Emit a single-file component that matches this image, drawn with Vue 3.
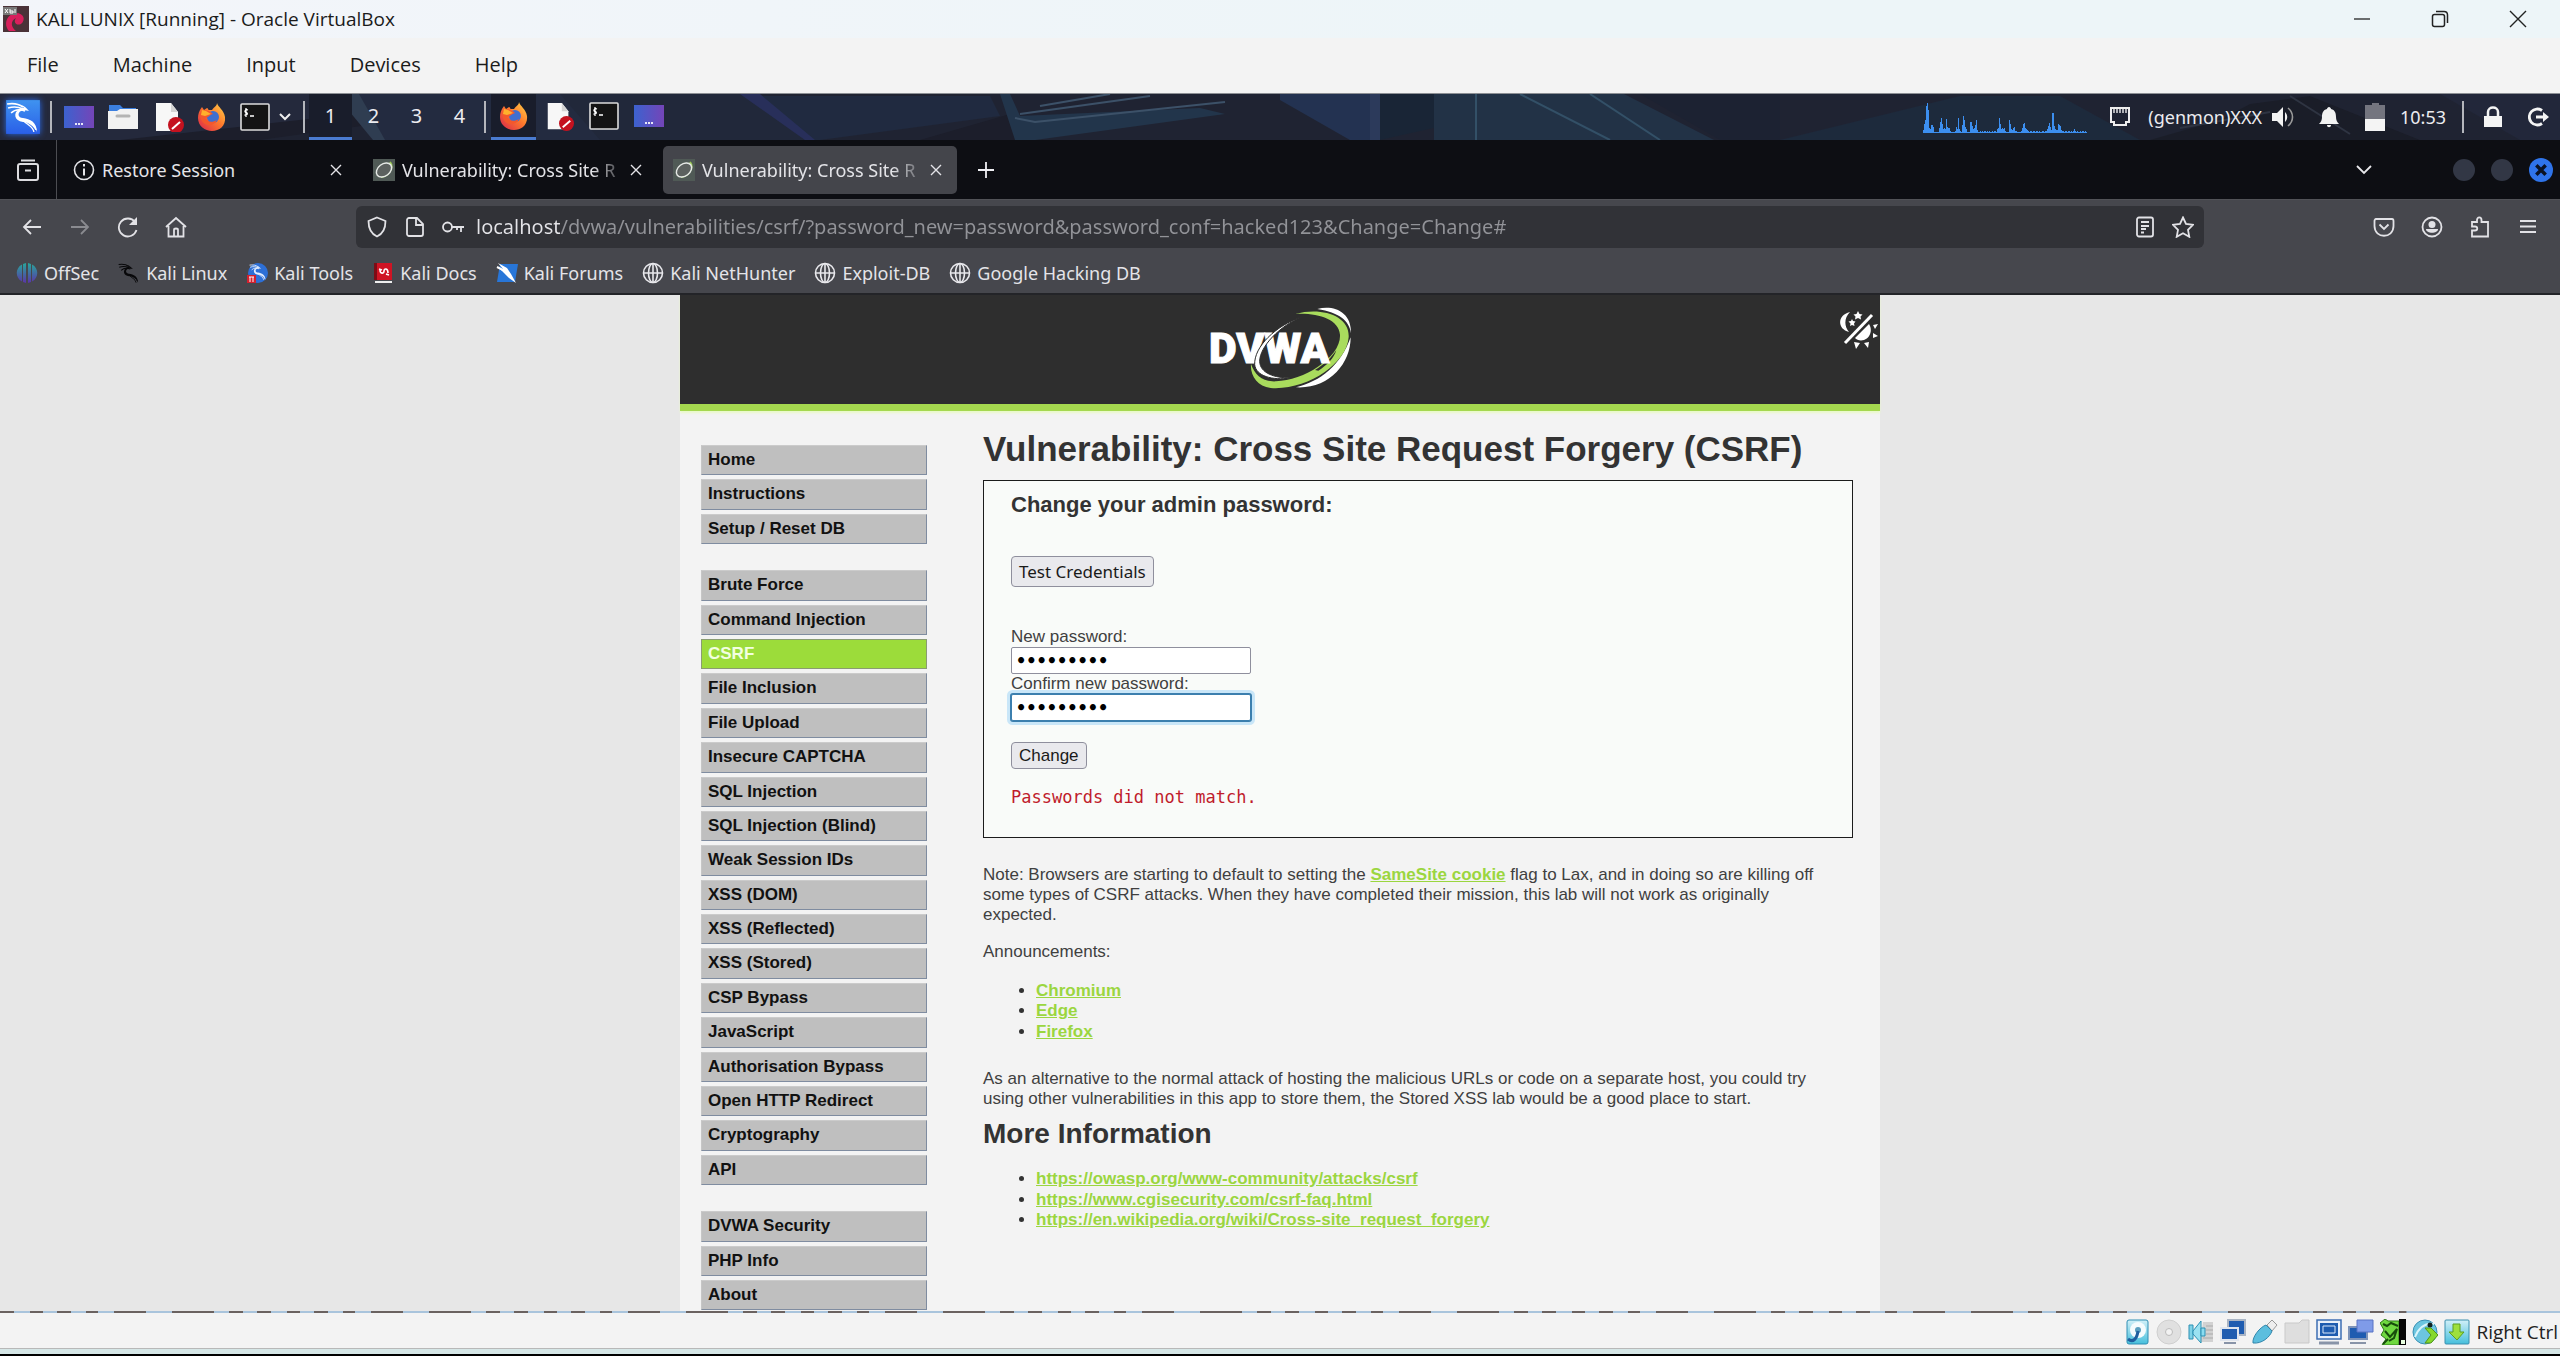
<script setup>
const menuGroups = [
  ['Home', 'Instructions', 'Setup / Reset DB'],
  [
    'Brute Force', 'Command Injection', 'CSRF', 'File Inclusion', 'File Upload',
    'Insecure CAPTCHA', 'SQL Injection', 'SQL Injection (Blind)', 'Weak Session IDs',
    'XSS (DOM)', 'XSS (Reflected)', 'XSS (Stored)', 'CSP Bypass', 'JavaScript',
    'Authorisation Bypass', 'Open HTTP Redirect', 'Cryptography', 'API',
  ],
  ['DVWA Security', 'PHP Info', 'About'],
]
const vmMenus = ['File', 'Machine', 'Input', 'Devices', 'Help']
const tabs = [
  { title: 'Restore Session', icon: 'i-info' },
  { title: 'Vulnerability: Cross Site R', icon: 'i-dvwa', faded: true },
  { title: 'Vulnerability: Cross Site R', icon: 'i-dvwa', faded: true, active: true },
]
const bookmarks = [
  { label: 'OffSec', icon: 'i-offsec' },
  { label: 'Kali Linux', icon: 'i-dragon-dark' },
  { label: 'Kali Tools', icon: 'i-tools' },
  { label: 'Kali Docs', icon: 'i-docs' },
  { label: 'Kali Forums', icon: 'i-forums' },
  { label: 'Kali NetHunter', icon: 'i-globe' },
  { label: 'Exploit-DB', icon: 'i-globe' },
  { label: 'Google Hacking DB', icon: 'i-globe' },
]
const announcements = ['Chromium', 'Edge', 'Firefox']
const references = [
  'https://owasp.org/www-community/attacks/csrf',
  'https://www.cgisecurity.com/csrf-faq.html',
  'https://en.wikipedia.org/wiki/Cross-site_request_forgery',
]
const tasks = ['i-firefox', 'i-blocked-doc', 'i-terminal', 'i-desktop']
const statusIcons = [
  's-disk', 's-optical', 's-audio', 's-network', 's-usb', 's-folder',
  's-display', 's-record', 's-cpu', 's-mouse', 's-keyboard',
]
const address = 'localhost/dvwa/vulnerabilities/csrf/?password_new=password&password_conf=hacked123&Change=Change#'
const cpuLoad = [
  2, 8, 12, 26, 29, 22, 4, 3, 7, 7, 5, 0, 0, 0, 0, 0, 4, 10, 14, 8, 3, 4, 3, 13, 5, 4, 4, 1, 0, 0, 0, 0,
  1, 5, 3, 14, 3, 1, 0, 7, 16, 12, 5, 3, 0, 0, 0, 10, 10, 6, 3, 4, 7, 12, 2, 0, 0, 1, 0, 1, 0, 1, 1, 0,
  1, 0, 1, 0, 0, 1, 0, 1, 1, 0, 3, 4, 14, 8, 3, 4, 3, 4, 1, 0, 0, 0, 12, 8, 3, 2, 4, 5, 1, 1, 0, 0, 0, 0, 1, 4, 8, 9, 4,
  3, 2, 1, 0, 1, 1, 0, 1, 1, 0, 1, 1, 0, 1, 0, 0, 1, 1, 0, 1, 1, 3, 6, 9, 5, 2, 19, 19, 6, 3, 2, 2, 8, 7, 6, 2,
  1, 1, 0, 1, 1, 0, 1, 1, 0, 1, 0, 1, 3, 1, 0, 1, 0, 0, 1, 0, 1, 1, 0, 1, 0,
]
</script>

<template>
  <div class="screen">
    <svg class="defs" aria-hidden="true">
      <defs>
        <linearGradient id="g-desk" x1="0" x2="1" y1="0" y2="0"><stop offset="0" stop-color="#3c62cf" /><stop offset="1" stop-color="#7445b8" /></linearGradient>
        <linearGradient id="g-kali" x1="0" x2="0" y1="0" y2="1"><stop offset="0" stop-color="#3f93f0" /><stop offset="1" stop-color="#2a5fe8" /></linearGradient>
        <linearGradient id="g-fox" x1="1" x2="0" y1="0" y2="1"><stop offset="0" stop-color="#ffd84a" /><stop offset=".45" stop-color="#ff7a2c" /><stop offset="1" stop-color="#d8234c" /></linearGradient>
        <linearGradient id="g-off" x1="0" x2="0" y1="0" y2="1"><stop offset="0" stop-color="#27a79b" /><stop offset="1" stop-color="#5b34a8" /></linearGradient>
        <linearGradient id="g-cyan" x1="0" x2="0" y1="0" y2="1"><stop offset="0" stop-color="#d2f0f8" /><stop offset="1" stop-color="#46bfdc" /></linearGradient>
      </defs>
      <symbol id="i-dragon" viewBox="0 0 34 34">
        <path d="M1 4c6-1 12 0 16 3M2 8c6-2 11-1 15 1M5 13c4-4 9-4 14-2" fill="none" stroke="currentColor" stroke-width="1.6" />
        <path d="M15 5c4 1 6 4 8 6-3-1-6-1-8 0-4 2-3 7 2 7 7 1 14 4 14 14-2-7-8-10-14-10-9-1-10-9-4-13 2-1 3-1 5-1z" fill="currentColor" />
        <path d="M17 20c4 5 10 6 11 12M20 21c5 3 9 5 10 9" fill="none" stroke="currentColor" stroke-width="1.4" />
      </symbol>
      <symbol id="i-desktop" viewBox="0 0 30 30">
        <rect y="4" width="30" height="22" fill="url(#g-desk)" />
        <path d="M11 22h2m1 0h2m1 0h2" stroke="#e8e8f8" stroke-width="2" />
      </symbol>
      <symbol id="i-files" viewBox="0 0 30 30">
        <path d="M1 3h11l3 3h13v7H1z" fill="#3b7fe0" /><path d="M0 9h9l3-2h18v20H0z" fill="#f2f2f2" />
        <path d="M9 14h12" stroke="#b4b4b4" stroke-width="3" stroke-linecap="round" />
      </symbol>
      <symbol id="i-blocked-doc" viewBox="0 0 32 30">
        <path d="M4 1h15l7 9v19H4z" fill="#f7f7f7" /><path d="M19 1l7 9h-7z" fill="#d4d4d4" />
        <circle cx="24" cy="23" r="8" fill="#c4121f" /><path d="M20 27l8-7" stroke="#fff" stroke-width="2" />
      </symbol>
      <symbol id="i-firefox" viewBox="0 0 28 30">
        <path d="M19 1c1 4 7 7 8 14 1 9-6 14-13 14S0 24 0 16c0-4 1-7 4-11l2 3 3-2c1 0 1 2 2 2h3c2-3 5-4 5-7z" fill="url(#g-fox)" />
        <circle cx="15" cy="15" r="6" fill="#3f6fd0" /><path d="M3 10c5-4 10 0 12 2-4 1-5 4-8 4 2 4 7 5 12 2-3 7-13 7-16-1-1-3-1-5 0-7z" fill="#f4582c" />
        <path d="M4 8l4 1 5 3-6 2-4-1z" fill="#ffb02c" />
      </symbol>
      <symbol id="i-terminal" viewBox="0 0 30 30">
        <rect x="1" y="2" width="28" height="26" rx="1" fill="#141414" stroke="#dcdcdc" stroke-width="1.6" />
        <path d="M8 8c-3-1-4 2-2 2.500s2 3-1.500 2.500M6 6v9M10 14h4" fill="none" stroke="#fff" stroke-width="1.3" />
      </symbol>
      <symbol id="i-info" viewBox="0 0 22 22">
        <circle cx="11" cy="11" r="9.500" fill="none" stroke="currentColor" stroke-width="1.6" />
        <path d="M11 5v2.500M11 9.500v7" stroke="currentColor" stroke-width="2" />
      </symbol>
      <symbol id="i-dvwa" viewBox="0 0 22 22">
        <rect width="22" height="22" fill="#505a56" />
        <path d="M17 3c4 5-1 14-9 15" fill="none" stroke="#9ccb55" stroke-width="2" />
        <ellipse cx="11" cy="11" rx="8.500" ry="6" transform="rotate(-38 11 11)" fill="#5c615f" stroke="#e6e9e6" stroke-width="1.500" />
      </symbol>
      <symbol id="i-close" viewBox="0 0 12 12"><path d="M1 1l10 10M11 1L1 11" stroke="currentColor" stroke-width="1.400" /></symbol>
      <symbol id="i-globe" viewBox="0 0 22 22">
        <g fill="none" stroke="#e8e8ec" stroke-width="1.600"><circle cx="11" cy="11" r="9.500" /><ellipse cx="11" cy="11" rx="4.500" ry="9.500" /><path d="M1.500 11h19M11 1.500v19" /></g>
      </symbol>
      <symbol id="i-offsec" viewBox="0 0 22 22">
        <path d="M6 2.500v17C-1 16-1 6 6 2.500zM10 1v20l-3-1V2zM12 1v20l3-1V2zM16 2.500v17c7-3.500 7-13.500 0-17z" fill="url(#g-off)" />
      </symbol>
      <symbol id="i-dragon-dark" viewBox="0 0 22 22"><use href="#i-dragon" color="#08080a" /></symbol>
      <symbol id="i-tools" viewBox="0 0 22 22">
        <circle cx="12" cy="11" r="10" fill="#2d6fd6" /><use href="#i-dragon" x="3" y="1" width="18" height="18" color="#e4eeff" />
        <path d="M1 13h9v8H1z" fill="#d3202e" /><path d="M3 15h5M4 15v5M7 15v5" stroke="#fff" stroke-width="1" />
      </symbol>
      <symbol id="i-docs" viewBox="0 0 22 22">
        <path d="M2 1h18v17H2z" fill="#cf1424" /><path d="M2 1h3v17H2z" fill="#7d0c16" /><path d="M3 20h17" stroke="#eee" stroke-width="2" />
        <path d="M8 8c0 4 4 4 4 1s4-3 4 2M7 7l3 1M14 12l3 1" fill="none" stroke="#fff" stroke-width="1.600" />
      </symbol>
      <symbol id="i-forums" viewBox="0 0 22 22">
        <path d="M4 2h18l-3 18H1z" fill="#2876d8" /><path d="M2 1l9 5 4 6 5 9-7-5-5-5-4-4 3 0z" fill="#fff" /><path d="M1 5l6 3" stroke="#fff" stroke-width="2" />
      </symbol>

      <symbol id="s-disk" viewBox="0 0 26 26"><rect x="3" y="1" width="21" height="24" rx="2" fill="url(#g-cyan)" stroke="#2f8fb4" /><circle cx="14" cy="11" r="8" fill="#f4fbfd" /><circle cx="14" cy="11" r="3" fill="#5a9fc0" /><path d="M4 20c5 4 9 0 10-8" stroke="#1f5f9f" stroke-width="3" fill="none" /></symbol>
      <symbol id="s-optical" viewBox="0 0 26 26"><circle cx="13" cy="13" r="12" fill="#e0e0e0" stroke="#cfcfcf" /><circle cx="13" cy="13" r="3.500" fill="#f2f2f2" stroke="#bbb" /></symbol>
      <symbol id="s-audio" viewBox="0 0 26 26"><path d="M15 3h10v20H13v-4z" fill="#d2d2d2" /><path d="M18 7h7M18 11h7M18 15h7M15 19h10" stroke="#aaa" /><path d="M1 6h4v14H1z" fill="#7fd3e8" stroke="#2c8fb2" /><path d="M5 12l8-10v22L5 15z" fill="#9be2f2" stroke="#2c8fb2" /><path d="M13 9h4v8h-4z" fill="#8adcf0" stroke="#2c8fb2" /></symbol>
      <symbol id="s-network" viewBox="0 0 26 26"><path d="M8 1h17v15H8z" fill="#1f5cb0" stroke="#a9b4c4" stroke-width="2" /><path d="M1 9h17v12H1z" fill="#1f5cb0" stroke="#dfe5ee" stroke-width="2" /><path d="M4 24h12" stroke="#8894a8" stroke-width="2" /></symbol>
      <symbol id="s-usb" viewBox="0 0 26 26"><path d="M15 6l5-5 5 5-5 6z" fill="#eee" stroke="#999" /><path d="M1 24C0 18 8 8 14 6l6 6c-2 6-10 13-19 12z" fill="#5cbede" stroke="#3186ac" /></symbol>
      <symbol id="s-folder" viewBox="0 0 26 26"><path d="M1 4h14l3-3h7v23H1z" fill="#dedede" stroke="#c9c9c9" /></symbol>
      <symbol id="s-display" viewBox="0 0 26 26"><path d="M1 1h24v19H1z" fill="#eaf0fa" stroke="#3e6fb4" stroke-width="1.500" /><path d="M4 4h18v13H4z" fill="#1f5cb0" /><path d="M7 7h12v7H7z" fill="none" stroke="#dbe8fa" /><path d="M3 24h20" stroke="#8894a8" stroke-width="3" /></symbol>
      <symbol id="s-record" viewBox="0 0 26 26"><path d="M1 8h18v12H1z" fill="#1f5cb0" stroke="#7d93b8" stroke-width="2" /><path d="M2 24h16" stroke="#8894a8" stroke-width="2" /><path d="M9 1h16v12H9z" fill="#7f9be8" stroke="#5873c4" /></symbol>
      <symbol id="s-cpu" viewBox="0 0 26 26"><path d="M0 4l5-4 3 2h11v24H2l4-6-5-4 3-5z" fill="#6fd840" stroke="#2d7a16" /><path d="M3 5l4 2 4-3 7 3M5 12l5 6 7-8-3 9-5 3M3 25l5-5" fill="none" stroke="#174d0c" stroke-width="2" /><path d="M19 0h7v26h-7z" fill="#060606" /><path d="M21 21h4v4h-4z" fill="#e8ffe0" /></symbol>
      <symbol id="s-mouse" viewBox="0 0 26 26"><ellipse cx="13" cy="13" rx="12" ry="12" fill="#6cc5e0" stroke="#3a90b4" /><path d="M3 18C7 8 14 4 22 5" stroke="#d9f4fb" fill="none" stroke-width="2" /><circle cx="18" cy="6" r="2.500" fill="#122" /><path d="M13 9l6 7-6 8h6l7-8-7-7z" fill="#86d82c" stroke="#52971a" /></symbol>
      <symbol id="s-keyboard" viewBox="0 0 26 26"><rect x="1" y="1" width="24" height="24" rx="1" fill="url(#g-cyan)" stroke="#3b8fae" /><path d="M9 5h7v8h4l-7 8-8-8h4z" fill="#9ee03c" stroke="#5c9f20" /></symbol>
    </svg>

    <header class="vm-title">
      <svg class="vm-logo" viewBox="0 0 26 26">
        <rect width="26" height="26" fill="#4a3238" /><path d="M6 25c-6-7-2-17 7-18 8 0 10 7 5 11-5 2-8-2-5-6-6 3-5 9 0 13z" fill="#d81f5c" />
        <path d="M0 1h14v8H0z" fill="#777" /><path d="M2 3l3 4m0-4L2 7m5-4v4h3V5H7m5-2v4" stroke="#fff" stroke-width="1" fill="none" />
      </svg>
      <span class="grow">KALI LUNIX [Running] - Oracle VirtualBox</span>
      <button aria-label="Minimise"><svg viewBox="0 0 18 18"><path d="M1 9h16" stroke="#222" stroke-width="1.300" /></svg></button>
      <button aria-label="Restore"><svg viewBox="0 0 18 18" fill="none" stroke="#222" stroke-width="1.500"><rect x="1.500" y="4.500" width="12" height="12" rx="2" /><path d="M5 1.500h8c2 0 3.500 1.500 3.500 3.500v8" /></svg></button>
      <button aria-label="Close"><svg viewBox="0 0 18 18"><path d="M1 1l16 16M17 1L1 17" stroke="#222" stroke-width="1.400" /></svg></button>
    </header>

    <nav class="vm-menu">
      <button v-for="m in vmMenus" :key="m">{{ m }}</button>
    </nav>

    <div class="panel">
      <svg class="panel-art" viewBox="0 0 2560 46" preserveAspectRatio="none" aria-hidden="true">
        <rect width="2560" height="46" fill="#202433" />
        <path d="M0 0h500L180 46H0z" fill="#262c40" /><path d="M120 46L480 6l40 4-260 36z" fill="#1b1d2a" />
        <path d="M352 0h220l80 46H378z" fill="#252f45" /><path d="M335 0l24 0 26 46-12 0z" fill="#35465c" />
        <path d="M560 0h190l60 46H600z" fill="#222a3e" /><path d="M750 2l240 0 10 20-180 24h-10z" fill="#212d45" />
        <path d="M740 0l20 0 55 46h-10z" fill="#2b3468" /><path d="M920 46l90-26 20 26z" fill="#1b1d29" />
        <path d="M1000 0h10l10 22 180-8 25 6-190 26-20 0z" fill="#243c54" /><path d="M1020 20l130-18M1040 12l70-12M1015 24l20 4 190-20" stroke="#46617b" stroke-width="2" fill="none" />
        <path d="M1280 0h90v46h-20L1280 6z" fill="#25385c" /><path d="M1370 0h10v46h-10z" fill="#31436a" /><path d="M1380 0h54v34l-54 12z" fill="#182638" />
        <path d="M1434 0h190l90 46h-280z" fill="#23384e" /><path d="M1476 0v46M1520 0l90 46M1590 0l70 46" stroke="#3a6079" stroke-width="2" />
        <path d="M1640 0h140v46h-60z" fill="#1c2233" /><path d="M1780 46L1960 2h100l80 44z" fill="#1d2d40" />
        <path d="M2150 46l70-20 30-16 60-8 110 44z" fill="#191c26" /><path d="M2180 34l90-16M2290 2l60 38" stroke="#343a48" stroke-width="2" /><path d="M2440 0h120v46h-40z" fill="#23293d" />
      </svg>
      <button class="kali" aria-label="Applications"><svg viewBox="0 0 36 36"><rect x="2" y="2" width="32" height="32" fill="url(#g-kali)" /><use href="#i-dragon" x="2" y="2" width="32" height="32" color="#fff" /></svg></button>
      <i class="sep"></i>
      <div class="launchers">
        <button aria-label="Show desktop"><svg class="w30"><use href="#i-desktop" /></svg></button>
        <button aria-label="Files"><svg class="w30"><use href="#i-files" /></svg></button>
        <button aria-label="Editor"><svg class="w32"><use href="#i-blocked-doc" /></svg></button>
        <button aria-label="Firefox"><svg class="w28"><use href="#i-firefox" /></svg></button>
        <button aria-label="Terminal"><svg class="w30"><use href="#i-terminal" /></svg></button>
      </div>
      <button class="more" aria-label="More terminals"><svg viewBox="0 0 14 14"><path d="M2 4l5 5 5-5" fill="none" stroke="#eee" stroke-width="2" /></svg></button>
      <i class="sep"></i>
      <button v-for="n in 4" :key="n" class="workspace" :class="{ on: n === 1 }">{{ n }}</button>
      <i class="sep tight"></i>
      <button v-for="(t, i) in tasks" :key="t" class="task" :class="{ on: i === 0 }" :aria-label="t"><svg class="w30"><use :href="'#' + t" /></svg></button>

      <div class="tray">
        <svg class="cpu" viewBox="0 0 172 32" preserveAspectRatio="none" aria-hidden="true">
          <rect v-for="(h, i) in cpuLoad" :key="i" :x="i" :y="31 - h" width="1" :height="h + 1" fill="#3c8ff0" />
        </svg>
        <svg class="w22 wired" viewBox="0 0 22 22"><path d="M2 2h18v14h-3v3H5v-3H2z" fill="none" stroke="#eee" stroke-width="2" /><path d="M5 3v4M8 3v4M11 3v4M14 3v4M17 3v4" stroke="#eee" stroke-width="1.400" /></svg>
        <span>(genmon)XXX</span>
        <svg class="w22 speaker" viewBox="0 0 22 22"><path d="M0 7h5l6-6v20l-6-6H0z" fill="#f2f2f2" /><path d="M13 6c3 3 3 7 0 10z" fill="#f2f2f2" /><path d="M16 2c6 5 6 13 0 18" fill="none" stroke="#999" stroke-width="1.600" /></svg>
        <svg class="w22 bell" viewBox="0 0 22 22"><path d="M11 1c1 0 2 1 2 2 4 1 5 4 5 8 0 3 1 5 3 7H1c2-2 3-4 3-7 0-4 1-7 5-8 0-1 1-2 2-2zM9 19h4c0 3-4 3-4 0z" fill="#f2f2f2" /></svg>
        <svg class="battery" viewBox="0 0 22 28"><path d="M8 0h7v2h6v14H1V2h7z" fill="#74757f" /><path d="M1 16h20v12H1z" fill="#f4f4f4" /></svg>
        <time>10:53</time>
        <i class="sep"></i>
        <button aria-label="Lock"><svg class="w22" viewBox="0 0 22 22"><path d="M2 10h18v11H2z" fill="#f4f4f4" /><path d="M6 10V6c0-6 10-6 10 0v4" fill="none" stroke="#f4f4f4" stroke-width="2.500" /></svg></button>
        <button aria-label="Log out" class="logout"><svg class="w22" viewBox="0 0 22 22"><path d="M14 4.500a8 8 0 1 0 0 13" fill="none" stroke="#f4f4f4" stroke-width="2.800" /><path d="M8 9.500h7V6l6 5-6 5v-3.500H8z" fill="#f4f4f4" /></svg></button>
      </div>
    </div>

    <div class="tabbar">
      <button class="archive" aria-label="Recent"><svg viewBox="0 0 22 22" fill="none" stroke="#dcdce0" stroke-width="2"><path d="M4 1.500h14" /><path d="M3 5h16c1 0 2 1 2 2v12c0 1-1 2-2 2H3c-1 0-2-1-2-2V7c0-1 1-2 2-2z" /><path d="M8 11.500h6" /></svg></button>
      <div v-for="(t, i) in tabs" :key="i" class="tab" :class="{ active: t.active }">
        <svg class="w22"><use :href="'#' + t.icon" /></svg>
        <a href="#" class="tab-title" :class="{ faded: t.faded }">{{ t.title }}</a>
        <button aria-label="Close tab"><svg class="w12"><use href="#i-close" /></svg></button>
      </div>
      <button class="new-tab" aria-label="New tab"><svg viewBox="0 0 18 18"><path d="M9 1v16M1 9h16" stroke="#f0f0f4" stroke-width="1.800" /></svg></button>
      <div class="win-controls">
        <button class="list-tabs" aria-label="List all tabs"><svg viewBox="0 0 18 18"><path d="M2 5l7 7 7-7" fill="none" stroke="#e8e8ec" stroke-width="1.800" /></svg></button>
        <button class="dot" aria-label="Minimise window"></button>
        <button class="dot" aria-label="Maximise window"></button>
        <button class="dot quit" aria-label="Close window"><svg viewBox="0 0 12 12"><path d="M2 2l8 8M10 2l-8 8" stroke="#0b1324" stroke-width="3" /></svg></button>
      </div>
    </div>

    <div class="toolbar">
      <button aria-label="Back"><svg viewBox="0 0 22 22"><path d="M20 11H3M10 4l-7 7 7 7" /></svg></button>
      <button aria-label="Forward" class="dim"><svg viewBox="0 0 22 22"><path d="M2 11h17M12 4l7 7-7 7" /></svg></button>
      <button aria-label="Reload"><svg viewBox="0 0 22 22"><path d="M18 6a9 9 0 1 0 1.500 8" /><path d="M20 1v8h-8z" fill="currentColor" stroke="none" /></svg></button>
      <button aria-label="Home"><svg viewBox="0 0 22 22"><path d="M1 11l10-9 10 9M3.500 10v10.500h15V10M9 20v-6c0-2 4-2 4 0v6" /></svg></button>
      <div class="urlbar">
        <svg viewBox="0 0 22 22"><path d="M11 1.500l8.500 3.500c0 8-3 13-8.500 15.500C5.500 18 2.500 13 2.500 5z" /></svg>
        <svg viewBox="0 0 22 22"><path d="M5 2h8l6 6v10c0 1-1 2-2 2H5c-1 0-2-1-2-2V4c0-1 1-2 2-2zM12 2v7h7" /></svg>
        <svg viewBox="0 0 22 22"><circle cx="5.500" cy="11" r="4.500" /><path d="M10 11h12M19 11v5M15 11v3" /></svg>
        <input type="text" aria-label="Address" :value="address" />
        <svg viewBox="0 0 22 22"><rect x="3" y="1.500" width="16" height="19" rx="2" /><path d="M7 6h8M7 10h8M7 13h5M7 16.500h3" /></svg>
        <svg viewBox="0 0 22 22"><path d="M11 1.500l3 6.500 7 .8-5 5 1.300 7L11 17.300 4.700 20.800l1.300-7-5-5L8 8z" /></svg>
      </div>
      <button aria-label="Pocket"><svg viewBox="0 0 22 22"><path d="M3 3h16c1 0 1.500 1 1.500 2v5c0 13-19 13-19 0V5c0-1 .5-2 1.500-2z" /><path d="M6.500 8.500L11 13l4.500-4.500" /></svg></button>
      <button aria-label="Account"><svg viewBox="0 0 22 22"><circle cx="11" cy="11" r="9.500" /><circle cx="11" cy="8.500" r="3.500" fill="currentColor" stroke="none" /><path d="M5 13h12c0 5-12 5-12 0z" fill="currentColor" stroke="none" /></svg></button>
      <button aria-label="Extensions"><svg viewBox="0 0 22 22"><path d="M3 20.500v-6h3c3 0 3-4 0-4H3V6h5V4c0-3.500 4.500-3.500 4.500 0v2H19v14.500z" /></svg></button>
      <button aria-label="Menu"><svg viewBox="0 0 22 22"><path d="M3 5h16M3 10.500h16M3 16h16" /></svg></button>
    </div>

    <nav class="bookmarks">
      <a v-for="b in bookmarks" :key="b.label" href="#"><svg class="w22"><use :href="'#' + b.icon" /></svg>{{ b.label }}</a>
    </nav>

    <div class="viewport">
      <div class="site">
        <div class="site-header">
          <svg class="logo" viewBox="0 0 480 300" role="img" aria-label="DVWA">
            <path d="M352 27C400 14 455 35 453 100 448 62 418 38 352 27zM452 112c0 80-66 156-164 150 74-18 134-66 164-150z" fill="#fff" />
            <path d="M286 42C366 20 450 48 446 112 440 192 320 272 212 264 172 260 150 226 153 192 164 226 190 246 228 244 312 242 424 172 420 104 416 56 350 38 286 42z" fill="#a9dc5d" />
            <path d="M345 210c30-18 50-38 64-60-8 26-26 44-54 62z" fill="#2e2e2e" />
            <text x="27" y="188" font-family="Roboto, sans-serif" font-weight="900" font-size="128" fill="#fff" stroke="#fff" stroke-width="3">DVWA</text>
            <path d="M305 50C226 78 162 140 164 194c4 34 52 48 108 40-48 0-92-14-93-50 0-44 60-106 126-134z" fill="#fff" stroke="#2e2e2e" stroke-width="3" />
          </svg>
          <button class="theme" aria-label="Toggle theme">
            <svg viewBox="0 0 38 38" fill="#fff">
              <path d="M10 1C-3 4-3 18 9 21 4 15 4 7 10 1zM18 0l1.500 3 3 .5-2 2 .5 3-3-1.500L15 8.500l.5-3-2-2 3-.5zM12 8l1 2 2.500.5L14 12.500l.5 2.500-2.500-1-2 1 .5-2.500-2-2L11 10zM29 13c4 6 1 14-5 16-4 1-7 0-9-2z" />
              <path d="M33 14l5-1-3 5zM33 22l5 3-5 2zM14 31l6 1-4 6zM24 32l5-1-1 6z" />
              <path d="M5 32L32 4" stroke="#fff" stroke-width="3" />
            </svg>
          </button>
        </div>

        <div class="columns">
          <nav class="side">
            <ul v-for="(g, i) in menuGroups" :key="i">
              <li v-for="m in g" :key="m"><a href="#" :class="{ selected: m === 'CSRF' }">{{ m }}</a></li>
            </ul>
          </nav>

          <main>
            <h1>Vulnerability: Cross Site Request Forgery (CSRF)</h1>
            <form class="box" @submit.prevent>
              <h3>Change your admin password:</h3>
              <button type="button" class="btn test">Test Credentials</button>
              <label for="pw-new">New password:</label>
              <input id="pw-new" type="password" value="hacked123" autocomplete="off" />
              <label for="pw-conf">Confirm new password:</label>
              <input id="pw-conf" class="focused" type="password" value="hacked123" autocomplete="off" />
              <button type="submit" class="btn">Change</button>
              <pre>Passwords did not match.</pre>
            </form>

            <p class="note">Note: Browsers are starting to default to setting the <a href="#">SameSite cookie</a> flag to Lax, and in doing so are killing off some types of CSRF attacks. When they have completed their mission, this lab will not work as originally expected.</p>
            <p>Announcements:</p>
            <ul class="links"><li v-for="a in announcements" :key="a"><a href="#">{{ a }}</a></li></ul>
            <p class="alt">As an alternative to the normal attack of hosting the malicious URLs or code on a separate host, you could try using other vulnerabilities in this app to store them, the Stored XSS lab would be a good place to start.</p>
            <h2>More Information</h2>
            <ul class="links"><li v-for="r in references" :key="r"><a :href="r">{{ r }}</a></li></ul>
          </main>
        </div>
      </div>
    </div>

    <footer class="status">
      <svg class="edge" height="2" width="100%" aria-hidden="true"><line x1="0" y1="1" x2="94%" y2="1" stroke="#6a6260" stroke-width="2" stroke-dasharray="14 16 13 14 14 15 12 16 32 26 42 15 14 14" /></svg>
      <svg v-for="s in statusIcons" :key="s" class="w26"><use :href="'#' + s" /></svg>
      <span>Right Ctrl</span>
    </footer>
    <div class="desktop-edge"></div>
  </div>
</template>

<style>
body { margin: 0; background: #000; }
</style>

<style scoped>
* { box-sizing: border-box; }
.screen { height: 100vh; display: flex; flex-direction: column; overflow: hidden; font: 18px "Noto Sans", sans-serif; }
.screen > * { flex: none; }
.defs { position: absolute; width: 0; height: 0; }
button { border: 0; padding: 0; background: none; font: inherit; color: inherit; display: flex; align-items: center; justify-content: center; }
a { color: inherit; text-decoration: none; }
ul { list-style: none; margin: 0; padding: 0; }
.grow { flex: 1; }
.w12 { width: 12px; height: 12px; }
.w22 { width: 22px; height: 22px; }
.w26 { width: 26px; height: 26px; }
.w28 { width: 28px; height: 30px; }
.w30 { width: 30px; height: 30px; }
.w32 { width: 32px; height: 30px; }

.vm-title { height: 38px; display: flex; align-items: center; gap: 7px; padding: 0 7px 0 3px; background: linear-gradient(to right, #f3f5fa, #edf5f8 60%); color: #1b1b1b; font: 19px "Open Sans", sans-serif; }
.vm-logo { width: 26px; height: 26px; }
.vm-title button { width: 71px; height: 38px; }
.vm-title button svg { width: 18px; height: 18px; }
.vm-menu { height: 56px; display: flex; align-items: center; gap: 54px; padding: 0 0 3px 27px; background: #f3f3f3; border-bottom: 1px solid #8c8f94; color: #1b1b1b; font: 20px "Open Sans", sans-serif; }

.panel { position: relative; height: 46px; display: flex; align-items: center; padding-left: 4px; color: #ececf0; background: #1f2231; }
.panel > * { position: relative; }
.panel .panel-art { position: absolute; inset: 0; width: 100%; height: 100%; opacity: .75; }
.kali svg { width: 38px; height: 38px; filter: drop-shadow(0 0 3px #2a6cf0); }
.sep { width: 2px; height: 32px; margin: 0 12px 0 8px; background: #b4b6bc; }
.sep.tight { margin: 0 5px 0 3px; }
.launchers { display: flex; gap: 14px; }
.more { width: 14px; margin: 0 3px 0 8px; }
.more svg { width: 14px; height: 14px; }
.more + .sep { margin-right: 4px; }
.workspace { width: 43px; height: 46px; font-size: 20px; border-bottom: 3px solid transparent; }
.task { width: 45px; height: 46px; border-bottom: 3px solid transparent; }
.workspace.on, .task.on { background: #191d2b; border-color: #4a7bd0; }
.tray { flex: 1; display: flex; align-items: center; justify-content: flex-end; gap: 14px; padding-right: 10px; }
.cpu { width: 172px; height: 32px; align-self: flex-end; }
.wired { margin-right: 3px; }
.speaker { margin: 0 10px 0 -4px; }
.bell { margin-right: 10px; }
.battery { width: 22px; height: 28px; }
.tray .sep { margin: 0 4px 0 2px; }
.logout { margin-left: 10px; }

.tabbar { height: 59px; display: flex; align-items: center; gap: 6px; background: #0d0e13; color: #e4e4e8; }
.archive { width: 57px; height: 59px; border-right: 1px solid #4c4d52; }
.archive svg { width: 22px; height: 22px; }
.tab { width: 294px; height: 48px; display: flex; align-items: center; gap: 7px; padding: 0 15px 0 10px; border-radius: 5px; }
.tab.active { background: #44454b; }
.tab-title { flex: 1; white-space: nowrap; }
.faded { mask-image: linear-gradient(to right, #000 86%, transparent 102%); }
.new-tab { width: 46px; }
.new-tab svg { width: 18px; height: 18px; }
.win-controls { margin-left: auto; display: flex; align-items: center; gap: 16px; padding-right: 7px; }
.list-tabs { width: 40px; margin-right: 53px; }
.list-tabs svg { width: 18px; height: 18px; }
.dot { width: 22px; height: 22px; border-radius: 50%; background: #323745; }
.dot.quit { width: 24px; height: 24px; background: #2f74ea; }
.quit svg { width: 14px; height: 14px; }

.toolbar { height: 56px; display: flex; align-items: center; padding: 0 8px 2px; background: #46474d; border-top: 1px solid #515257; color: #e2e2e6; }
.toolbar svg { width: 22px; height: 22px; fill: none; stroke: currentColor; stroke-width: 1.8; }
.toolbar > button { width: 48px; height: 48px; }
.dim { color: #8a8b90; }
.urlbar { flex: 1; height: 42px; margin: 0 156px; padding: 0 10px; display: flex; align-items: center; gap: 16px; background: #313237; border-radius: 6px; }
.urlbar input { flex: 1; min-width: 0; height: 42px; margin-left: -4px; border: 0; padding: 0; outline: 0; font: 20px "Noto Sans", sans-serif; color: transparent; background: linear-gradient(to right, #e4e4e8 85px, #929398 85px); background-clip: text; }

.bookmarks { height: 40px; display: flex; align-items: center; gap: 19px; padding: 0 16px 2px; background: #46474d; border-bottom: 2px solid #232428; color: #e4e4e8; }
.bookmarks a { display: flex; align-items: center; gap: 6px; }

.screen > .viewport { flex: 1; min-height: 0; overflow: hidden; background: #e7e7e7; font: 17px "Liberation Sans", sans-serif; color: #404040; }
.site { max-width: 1200px; min-height: 100%; margin: 0 auto; background: #f3f3f3; }
.site-header { position: relative; height: 116px; display: flex; justify-content: center; align-items: flex-start; padding-top: 5px; background: #2e2e2e; border-bottom: 7px solid #a5d84f; box-shadow: 0 2px 2px #e9f9c8; }
.logo { width: 160px; height: 100px; }
.theme { position: absolute; right: 2px; top: 16px; }
.theme svg { width: 38px; height: 38px; }
.columns { display: flex; gap: 56px; padding: 0 27px 0 21px; }

.side { width: 226px; flex: none; padding-top: 34px; display: flex; flex-direction: column; gap: 26px; line-height: 1.2; }
.side ul { display: flex; flex-direction: column; gap: 4px; }
.side a { display: block; padding: 4px 6px; border: 1px solid #7f8ca0; border-top-color: #cbcbcb; border-left-color: #c6c6c6; background: #bfbfbf; color: #111; font-weight: bold; }
.side a.selected { background: #9cdc3a; border-color: #8a9c72; color: #f2ffe0; }

main { flex: 1; min-width: 0; padding-top: 18px; }
h1, h2, h3, p, pre { margin: 0; }
h1 { font-size: 35px; line-height: 40px; color: #333; }
h2 { font-size: 28px; line-height: 32px; margin-top: 9px; color: #333; }
h3 { font-size: 22px; line-height: 26px; margin-bottom: 38px; color: #333; }
.box { margin-top: 11px; padding: 11px 27px 30px; border: 1px solid #1c1c1c; background: #f9fbf9; display: flex; flex-direction: column; align-items: flex-start; }
.btn { height: 27px; padding: 0 7px; border: 1px solid #8f8f9d; border-radius: 4px; background: #e9e9ed; color: #1a1a1a; }
.test { height: 31px; margin-bottom: 40px; font: 17px "Noto Sans", sans-serif; }
.box label { line-height: 20px; }
.box input { width: 240px; height: 27px; padding: 0 4px; border: 1px solid #8f8f9d; border-radius: 2px; background: #fff; color: #000; font: bold 17px "DejaVu Sans Mono", monospace; outline: 0; }
.box .focused { margin-bottom: 21px; border-color: #3c7fae; box-shadow: 0 0 0 1px #3c7fae, 0 0 0 4px #c9e6f8; }
pre { margin-top: 18px; font: 17px/20px "DejaVu Sans Mono", monospace; color: #c01c2c; }
p { line-height: 20px; margin-top: 17px; max-width: 850px; }
.note, .alt { margin-top: 27px; }
main a { color: #9bd63f; font-weight: bold; text-decoration: underline; }
.links { list-style: disc; padding-left: 53px; margin-top: 19px; line-height: 1.2; }
.links li::marker { color: #333; }

.status { position: relative; height: 38px; display: flex; align-items: center; justify-content: flex-end; gap: 6px; padding: 2px 2px 0 0; background: #f3f3f3; border-top: 2px solid #a9c4dc; border-bottom: 1px solid #b8b8b8; color: #222; font: 19px "Open Sans", sans-serif; }
.edge { position: absolute; left: 0; top: -2px; }
.desktop-edge { height: 7px; background: #d5e6e6; border-bottom: 2px solid #000; }
</style>
